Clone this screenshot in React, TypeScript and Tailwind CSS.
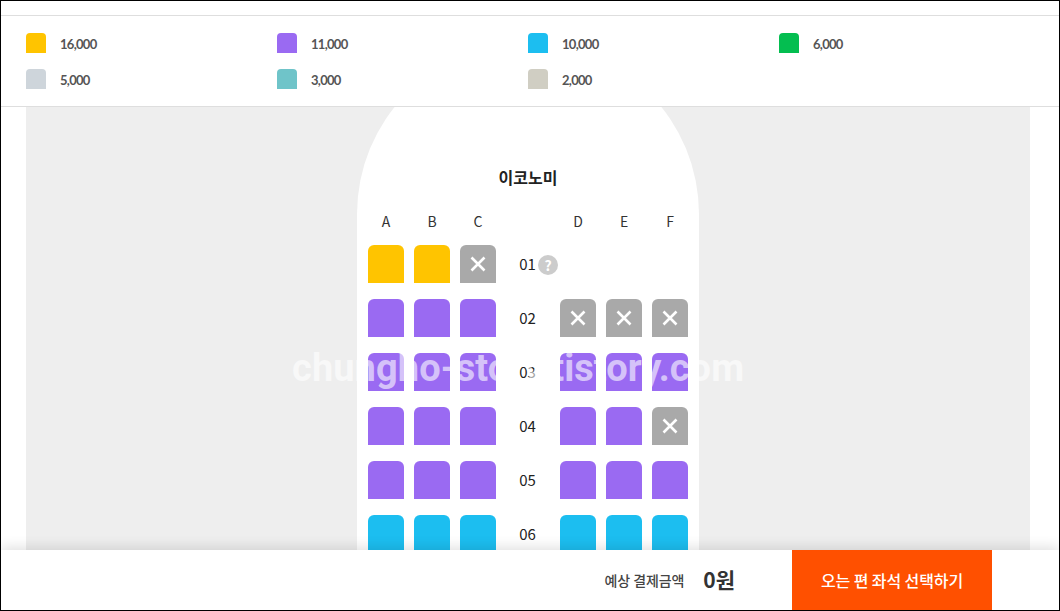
const legend = [
  { color: 'bg-[#ffc400]', price: '16,000' },
  { color: 'bg-[#9a6af2]', price: '11,000' },
  { color: 'bg-[#1cbef0]', price: '10,000' },
  { color: 'bg-[#04be50]', price: '6,000' },
  { color: 'bg-[#ced5db]', price: '5,000' },
  { color: 'bg-[#6fc4c9]', price: '3,000' },
  { color: 'bg-[#d0cec3]', price: '2,000' },
];

type Seat = 'yellow' | 'purple' | 'blue' | 'sold' | null;

const rows: { no: string; left: Seat[]; right: Seat[] }[] = [
  { no: '01', left: ['yellow', 'yellow', 'sold'], right: [null, null, null] },
  { no: '02', left: ['purple', 'purple', 'purple'], right: ['sold', 'sold', 'sold'] },
  { no: '03', left: ['purple', 'purple', 'purple'], right: ['purple', 'purple', 'purple'] },
  { no: '04', left: ['purple', 'purple', 'purple'], right: ['purple', 'purple', 'sold'] },
  { no: '05', left: ['purple', 'purple', 'purple'], right: ['purple', 'purple', 'purple'] },
  { no: '06', left: ['blue', 'blue', 'blue'], right: ['blue', 'blue', 'blue'] },
];

function SeatBox({ type }: { type: Seat }) {
  if (!type) return <div className="w-9 h-[38px]" />;
  if (type === 'sold') {
    return (
      <div className="w-9 h-[38px] rounded-t-[6px] bg-[#a9a9a9] flex items-center justify-center">
        <svg width="16" height="16" viewBox="0 0 16 16" fill="none">
          <path d="M1.5 1.5l13 13M14.5 1.5l-13 13" stroke="#fff" strokeWidth="2.6" />
        </svg>
      </div>
    );
  }
  const color = type === 'yellow' ? 'bg-[#ffc400]' : type === 'purple' ? 'bg-[#9a6af2]' : 'bg-[#1cbef0]';
  return <div className={`w-9 h-[38px] rounded-t-[6px] ${color}`} />;
}

function LetterRow({ letters }: { letters: string[] }) {
  return (
    <div className="flex gap-2.5">
      {letters.map((l) => (
        <div key={l} className="w-9 text-center text-[14px] leading-5 text-[#333]">
          {l}
        </div>
      ))}
    </div>
  );
}

export default function App() {
  return (
    <div
      className="relative w-[1060px] h-[611px] overflow-hidden border border-black bg-white flex flex-col"
      style={{ fontFamily: '"Noto Sans CJK KR", "Noto Sans", sans-serif' }}
    >
      <div className="h-[14px] shrink-0" />
      <div className="shrink-0 h-[92px] border-y border-[#dedede] pl-[25px] pt-[17px] grid grid-cols-[251px_251px_251px_251px] auto-rows-[36px]">
        {legend.map((item) => (
          <div key={item.price} className="flex items-start">
            <div className={`w-5 h-5 rounded-t-[4px] ${item.color}`} />
            <span
              className="ml-[14px] text-[13px] leading-[23px] font-bold tracking-[-0.7px] text-[#555]"
              style={{ fontFamily: 'Lato, sans-serif' }}
            >
              {item.price}
            </span>
          </div>
        ))}
      </div>

      <div className="flex-1 min-h-0 overflow-hidden mx-[25px] w-[1004px] bg-[#eeeeee] flex justify-center">
        <div className="w-[342px] shrink-0 -mt-[64px] h-[700px] rounded-t-[171px] bg-white flex flex-col">
          <div className="mt-[122px] h-6 text-center text-[16px] leading-6 font-bold text-[#222]">이코노미</div>
          <div className="mt-[22px] flex pl-[11px]">
            <LetterRow letters={['A', 'B', 'C']} />
            <div className="w-16" />
            <LetterRow letters={['D', 'E', 'F']} />
          </div>
          <div className="mt-[14px] pl-[11px] flex flex-col gap-4">
            {rows.map((row) => (
              <div key={row.no} className="flex">
                <div className="flex gap-2.5">
                  {row.left.map((s, i) => (
                    <SeatBox key={i} type={s} />
                  ))}
                </div>
                <div className="relative w-16 flex items-center justify-center pr-px text-[15px] text-[#222]">
                  {row.no}
                  {row.no === '01' && (
                    <span className="absolute left-[42px] top-[10px] w-5 h-5 rounded-full bg-[#cccccc] text-white text-[14px] leading-5 font-bold text-center">
                      ?
                    </span>
                  )}
                </div>
                <div className="flex gap-2.5">
                  {row.right.map((s, i) => (
                    <SeatBox key={i} type={s} />
                  ))}
                </div>
              </div>
            ))}
          </div>
        </div>
      </div>

      <div className="relative shrink-0 h-[60px] bg-white shadow-[0_-3px_12px_rgba(0,0,0,0.12)] flex items-center justify-end pr-[67px]">
        <span className="text-[14px] font-medium tracking-[-0.1px] text-[#444]">예상 결제금액</span>
        <span className="ml-[19px] text-[21px] font-bold text-[#333]">0원</span>
        <button className="ml-[57px] w-[200px] h-full bg-[#ff5000] text-white text-[16px] font-medium tracking-[-0.1px]">
          오는 편 좌석 선택하기
        </button>
      </div>

      <div
        className="absolute left-[291px] top-[344px] text-[38px] leading-[46px] font-bold tracking-[0.08px] text-white/60 whitespace-nowrap pointer-events-none"
        style={{ fontFamily: 'Roboto, sans-serif' }}
      >
        chungho-story.tistory.com
      </div>
    </div>
  );
}
